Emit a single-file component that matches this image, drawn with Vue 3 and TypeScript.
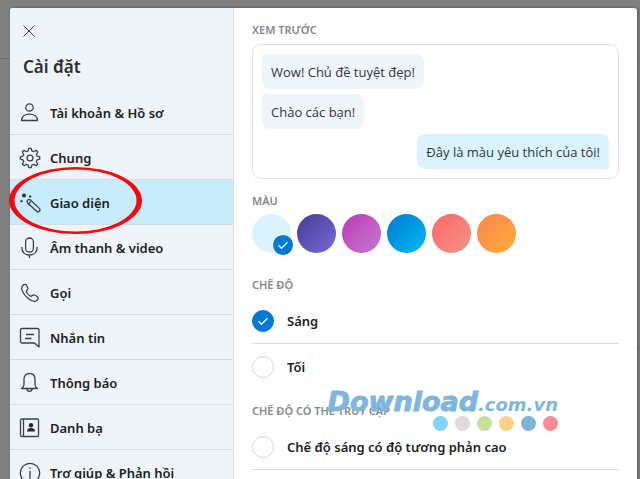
<script setup lang="ts">
import { ref } from 'vue'

interface MenuItem {
  id: string
  label: string
}

interface Swatch {
  id: string
  name: string
  from: string
  to: string
}

interface Mode {
  id: string
  label: string
}

const items: MenuItem[] = [
  { id: 'account', label: 'Tài khoản & Hồ sơ' },
  { id: 'general', label: 'Chung' },
  { id: 'appearance', label: 'Giao diện' },
  { id: 'audio', label: 'Âm thanh & video' },
  { id: 'calling', label: 'Gọi' },
  { id: 'messaging', label: 'Nhắn tin' },
  { id: 'notifications', label: 'Thông báo' },
  { id: 'contacts', label: 'Danh bạ' },
  { id: 'help', label: 'Trợ giúp & Phản hồi' },
]

const swatches: Swatch[] = [
  { id: 'light', name: 'Xanh nhạt', from: '#daf3fe', to: '#daf3fe' },
  { id: 'violet', name: 'Tím', from: '#453c97', to: '#7a6ad6' },
  { id: 'magenta', name: 'Hồng tím', from: '#c239b3', to: '#c07bd0' },
  { id: 'blue', name: 'Xanh dương', from: '#0078d4', to: '#00bcf2' },
  { id: 'coral', name: 'San hô', from: '#ff6666', to: '#f09489' },
  { id: 'orange', name: 'Cam', from: '#f9874e', to: '#ffab3b' },
]

const modes: Mode[] = [
  { id: 'light', label: 'Sáng' },
  { id: 'dark', label: 'Tối' },
]

const contrastModes: Mode[] = [{ id: 'contrast', label: 'Chế độ sáng có độ tương phản cao' }]

const dots: string[] = ['sky', 'silver', 'green', 'amber', 'steel', 'rose']

const active = ref('appearance')
const color = ref('light')
const mode = ref('light')
</script>

<template>
  <div class="page">
    <span class="rule rule-top"></span>
    <span class="rule rule-low"></span>
    <main class="dialog">
      <aside class="sidebar">
        <header class="head">
          <button class="close" type="button" aria-label="Đóng">
            <svg width="12" height="12" viewBox="0 0 12 12"><path d="M.5.5l11 11M11.5.5l-11 11" /></svg>
          </button>
          <h1>Cài đặt</h1>
        </header>
        <nav>
          <button
            v-for="item in items"
            :key="item.id"
            type="button"
            class="item"
            :class="{ active: item.id === active }"
            @click="active = item.id"
          >
            <svg class="icon" width="22" height="22" viewBox="0 0 22 22">
              <g v-if="item.id === 'account'">
                <circle cx="10.5" cy="5.5" r="3.7" />
                <path d="M2.6 18.5c0-4 3.3-6.4 7.9-6.4s7.9 2.4 7.900 6.400z" />
              </g>
              <g v-else-if="item.id === 'general'">
                <circle cx="11" cy="11" r="2.9" />
                <path d="M9.800 1.300h2.400l.7 2.700 1.600.7 2.500-1.400 1.700 1.700-1.400 2.500.7 1.600 2.700.7v2.400l-2.700.7-.7 1.600 1.400 2.500-1.700 1.700-2.500-1.400-1.600.7-.7 2.700H9.800l-.7-2.700-1.600-.7L5 18.700 3.300 17l1.400-2.500-.7-1.600-2.700-.7V9.800L4 9.100l.7-1.600L3.300 5 5 3.300l2.500 1.400L9.100 4z" />
              </g>
              <g v-else-if="item.id === 'appearance'">
                <rect x="6.500" y="11.700" width="16" height="4" rx="1.900" transform="rotate(43 14.500 13.700)" />
                <path d="M9.200 12.200l2.700-2.700" />
                <path class="solid" d="M3.300 1.800h3.400v3.400H3.300zM10.200 3.600h2v2h-2zM1.500 8.200h2v2h-2z" />
              </g>
              <g v-else-if="item.id === 'audio'">
                <rect x="6.600" y="1" width="7.800" height="14.200" rx="3.900" />
                <path d="M2.800 10c0 5 2.900 8 7.700 8s7.700-3 7.700-8M10.500 18v3" />
              </g>
              <g v-else-if="item.id === 'calling'">
                <path d="M4 3.300c1-1.300 2.900-1.300 3.600.1l1 2.200c.5 1.100.1 2-.6 2.700-.8.800-.7 1.700 0 2.700.7 1.100 1.600 2 2.700 2.700 1 .7 1.900.5 2.600-.2.800-.7 1.700-.9 2.700-.3l2.200 1.300c1.400.9 1.100 2.700-.1 3.800-1.900 1.700-5 1.500-8.800-1.700-2.600-2.200-4.600-4.400-5.800-7.100-1.200-2.500-.8-4.700.5-6.200z" />
              </g>
              <g v-else-if="item.id === 'messaging'">
                <path d="M3 1.500h15.500q1.500 0 1.500 1.500v17l-4.500-4H3q-1.500 0-1.500-1.500V3Q1.500 1.500 3 1.500zM7 7.500h8M6 11.500h6.500" />
              </g>
              <g v-else-if="item.id === 'notifications'">
                <path d="M2.500 16.500c1.700-1 2.500-1.700 2.500-4V7c0-3.400 2.200-5.500 5.500-5.500S16 3.600 16 7v5.500c0 2.300.8 3 2.500 4zM7.800 16.700c.2 1.700 1.200 2.600 2.700 2.600s2.500-.9 2.700-2.600" />
              </g>
              <g v-else-if="item.id === 'contacts'">
                <rect x="1.500" y="2" width="18" height="17.500" rx="1.300" />
                <path d="M4.500 2v17.500" />
                <circle class="solid" cx="12" cy="8.200" r="2.200" />
                <path class="solid" d="M8 14.600c0-2.500 1.600-3.600 4-3.600s4 1.100 4 3.600z" />
              </g>
              <g v-else>
                <circle cx="11" cy="11" r="9.700" />
                <path d="M11 8.700v8M11 5.200v1.500" />
              </g>
            </svg>
            <span>{{ item.label }}</span>
            <svg v-if="item.id === 'appearance'" class="ring" width="133" height="67" viewBox="0 0 133 67">
              <path fill-rule="evenodd" d="M0 33.500a66.500 33.500 0 0 1 133 0a66.500 33.500 0 0 1-133 0zM5.500 33.500a61 31 0 0 0 122 0a61 31 0 0 0-122 0z" />
            </svg>
          </button>
        </nav>
      </aside>

      <section class="content">
        <h2>XEM TRƯỚC</h2>
        <div class="preview">
          <p class="bubble">Wow! Chủ đề tuyệt đẹp!</p>
          <p class="bubble">Chào các bạn!</p>
          <p class="bubble own">Đây là màu yêu thích của tôi!</p>
        </div>

        <h2 class="gap-s">MÀU</h2>
        <div class="swatches">
          <label v-for="s in swatches" :key="s.id" class="swatch">
            <input
              v-model="color"
              type="radio"
              name="color"
              :value="s.id"
              :aria-label="s.name"
              :style="{ backgroundImage: `linear-gradient(135deg, ${s.from}, ${s.to})` }"
            />
            <svg v-if="color === s.id" class="badge" width="22" height="22" viewBox="0 0 22 22">
              <circle cx="11" cy="11" r="10.500" />
              <path d="M6.500 11.200l3 3 6-6" />
            </svg>
          </label>
        </div>

        <h2 class="gap-l">CHẾ ĐỘ</h2>
        <div class="modes">
          <label v-for="m in modes" :key="m.id" class="mode">
            <span class="radio">
              <input v-model="mode" type="radio" name="mode" :value="m.id" />
              <svg v-if="mode === m.id" width="22" height="22" viewBox="0 0 22 22"><path d="M6.500 11.200l3 3 6-6" /></svg>
            </span>
            <span>{{ m.label }}</span>
          </label>
        </div>

        <h2 class="gap-m">CHẾ ĐỘ CÓ THỂ TRUY CẬP</h2>
        <div class="modes lined">
          <label v-for="m in contrastModes" :key="m.id" class="mode">
            <span class="radio">
              <input v-model="mode" type="radio" name="mode" :value="m.id" />
              <svg v-if="mode === m.id" width="22" height="22" viewBox="0 0 22 22"><path d="M6.500 11.200l3 3 6-6" /></svg>
            </span>
            <span>{{ m.label }}</span>
          </label>
        </div>
      </section>
    </main>

    <div class="watermark">
      <div class="brand"><span class="brand-name">Download</span><span class="brand-tld">.com.vn</span></div>
      <div class="dots"><i v-for="d in dots" :key="d" :class="d"></i></div>
    </div>
  </div>
</template>

<style>
body {
  margin: 0;
  background: #808080;
}
</style>

<style scoped>
.page {
  position: relative;
  box-sizing: border-box;
  height: 100vh;
  padding: 8px 3px 0 10px;
  overflow: hidden;
  background: #808080;
  color: #1b1e23;
  font-family: 'Noto Sans', 'Open Sans', sans-serif;
  font-size: 13px;
}
.rule {
  position: absolute;
  left: 0;
  right: 0;
  height: 1px;
  background: #6c6c6c;
}
.rule-top { top: 58px; }
.rule-low { top: 347px; left: 50%; }
.dialog {
  position: relative;
  display: flex;
  min-height: 100%;
  border-radius: 3px 3px 0 0;
  background: #fff;
  box-shadow: 1px 0 3px #555;
}
.sidebar {
  box-sizing: border-box;
  flex: 0 0 224px;
  border-right: 1px solid #dbe0e6;
  border-top-left-radius: 3px;
  background: #eff4f9;
}
.head {
  box-sizing: border-box;
  height: 82px;
  padding: 17px 13px 0;
}
.close {
  display: block;
  padding: 0;
  border: 0;
  background: none;
}
.close svg {
  display: block;
  fill: none;
  stroke: #3a3e44;
}
h1 {
  margin: 17px 0 0;
  font-size: 17px;
  line-height: 26px;
  font-weight: 600;
  color: #2b2e33;
}
.item {
  position: relative;
  box-sizing: border-box;
  display: flex;
  align-items: center;
  gap: 9px;
  width: 100%;
  height: 45px;
  padding: 1px 9px 0;
  border: 0;
  border-bottom: 1px solid #d7dce2;
  background: none;
  color: inherit;
  font: inherit;
  font-weight: 600;
  text-align: left;
}
.item.active { background: #c7ecfc; }
.icon {
  flex: none;
  fill: none;
  stroke: #3b4148;
  stroke-width: 1.3;
  stroke-linejoin: round;
}
.icon .solid {
  fill: #24282d;
  stroke: none;
}
.ring {
  position: absolute;
  left: -1px;
  top: -13px;
  z-index: 1;
  fill: #fa0510;
  pointer-events: none;
}
.content {
  flex: 1;
  min-width: 0;
  padding: 13px 18px 20px;
}
h2 {
  margin: 0;
  font-size: 11px;
  line-height: 18px;
  font-weight: 600;
  color: #85888c;
}
.preview {
  display: flex;
  flex-direction: column;
  align-items: flex-start;
  gap: 5px;
  margin-top: 5px;
  padding: 9px;
  border: 1px solid #dfdfe5;
  border-radius: 9px;
}
.bubble {
  margin: 0;
  padding: 8px 9px 7px;
  border-radius: 2px 8px 8px 8px;
  background: #f0f5f9;
  font-family: 'Open Sans', 'Noto Sans', sans-serif;
  line-height: 20px;
  color: #33363a;
}
.own {
  align-self: flex-end;
  border-radius: 8px 8px 2px 8px;
  background: #daf3fe;
}
.gap-s { margin-top: 13px; }
.gap-l { margin-top: 23px; }
.gap-m { margin-top: 12px; }
.swatches {
  display: flex;
  gap: 6px;
  margin-top: 4px;
}
.swatch {
  position: relative;
  width: 39px;
  height: 39px;
}
input {
  display: block;
  box-sizing: border-box;
  width: 100%;
  height: 100%;
  margin: 0;
  appearance: none;
  border-radius: 50%;
}
.badge {
  position: absolute;
  right: -3px;
  bottom: -3px;
  fill: #0078d4;
  stroke: #fff;
}
.badge path,
.radio path {
  fill: none;
  stroke: #fff;
  stroke-width: 1.4;
}
.modes { margin-top: 4px; }
.mode {
  box-sizing: border-box;
  display: flex;
  align-items: center;
  gap: 13px;
  height: 46px;
  border-bottom: 1px solid #d9dbde;
  font-weight: 600;
}
.modes:not(.lined) .mode:last-child { border-color: transparent; }
.radio {
  position: relative;
  width: 22px;
  height: 22px;
}
.radio input { border: 1px solid #d5d7de; }
.radio input:checked {
  border-color: #0078d4;
  background: #0078d4;
}
.radio svg {
  position: absolute;
  left: 0;
  top: 0;
  pointer-events: none;
}
.watermark {
  position: absolute;
  right: 82px;
  top: 388px;
  pointer-events: none;
}
.brand {
  height: 28px;
  font-family: 'DejaVu Sans', sans-serif;
  font-style: italic;
  font-weight: 700;
  line-height: 28px;
  white-space: nowrap;
  color: #7fb6de;
}
.brand-name {
  font-size: 27px;
  -webkit-text-stroke: 1px #7fb6de;
}
.brand-tld { font-size: 18px; }
.dots {
  display: flex;
  justify-content: flex-end;
  gap: 7px;
}
.dots i {
  width: 15px;
  height: 15px;
  border-radius: 50%;
}
.sky { background: #7dd6f8; }
.silver { background: #dcdcdc; }
.green { background: #c3e19a; }
.amber { background: #fdd088; }
.steel { background: #7db4dc; }
.rose { background: #f88b92; }
</style>
